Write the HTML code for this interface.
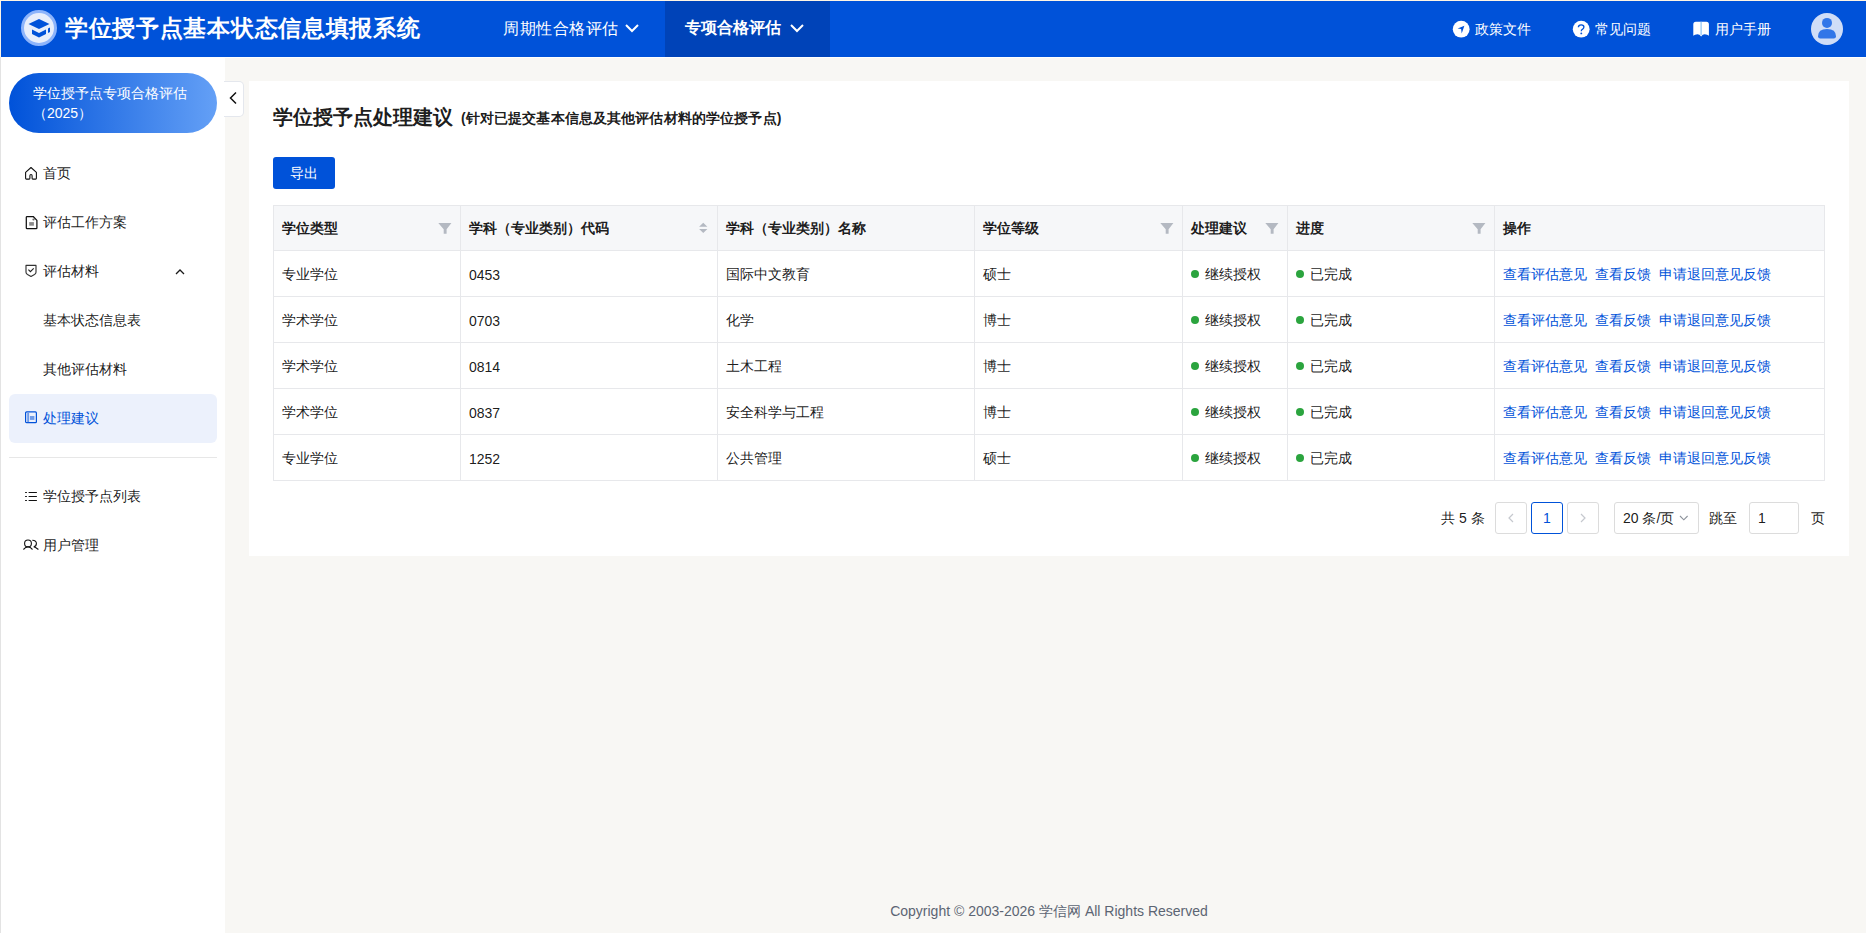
<!DOCTYPE html>
<html><head><meta charset="utf-8">
<style>
*{box-sizing:border-box;margin:0;padding:0}
html,body{width:1866px;height:933px;overflow:hidden;background:#fff;font-family:"Liberation Sans",sans-serif;color:rgba(0,0,0,.9);font-size:14px}
.abs{position:absolute}
.t{position:absolute;white-space:nowrap;line-height:20px}
#edgeT{left:0;top:0;width:1866px;height:1px;background:#fff5e4}
#edgeL{left:0;top:0;width:1px;height:933px;background:linear-gradient(#fcf4e6 0,#fcf4e6 57px,#e3e3e3 57px)}
#hdr{left:1px;top:1px;width:1865px;height:56px;background:#0052d9}
#navact{left:665px;top:1px;width:165px;height:56px;background:#0043b8}
.hw{color:#fff}
#main{left:225px;top:58px;width:1641px;height:875px;background:#f8f7f4}
#card{left:249px;top:81px;width:1600px;height:475px;background:#fff}
#pill{left:9px;top:73px;width:208px;height:60px;border-radius:30px;background:linear-gradient(90deg,#0052d9,#64a0f6)}
#actbg{left:9px;top:394px;width:208px;height:49px;border-radius:6px;background:#ecf1fc}
#divider{left:9px;top:457px;width:208px;height:1px;background:#e7e7e7}
#collapse{left:224px;top:81px;width:20px;height:36px;background:#fff;border:1px solid #e4e7ed;border-left:none;border-radius:0 5px 5px 0}
.menu{color:rgba(0,0,0,.9)}
table{position:absolute;left:273px;top:205px;width:1552px;border-collapse:collapse;table-layout:fixed}
td,th{border:1px solid #e7e8eb;height:46px;padding:0 8px;text-align:left;font-size:14px;white-space:nowrap;position:relative}
th{background:#f6f7f9;font-weight:bold;height:45px;padding-top:2px}
td{padding-top:2px}
.dot{display:inline-block;width:8px;height:8px;border-radius:4px;background:#2ba43e;margin-right:6px;vertical-align:1px}
.lnk{color:#0052d9;margin-right:8px}
.fi{position:absolute;right:9px;top:18px}
.pg{position:absolute;top:502px;height:32px;border:1px solid #dcdcdc;border-radius:3px;background:#fff}
#foot{left:249px;width:1600px;top:901px;text-align:center;color:#5c6573;font-size:14px}
</style></head><body>
<div id="edgeT" class="abs"></div>
<div id="edgeL" class="abs"></div>
<div id="hdr" class="abs"></div>
<div id="navact" class="abs"></div>

<!-- logo -->
<svg class="abs" style="left:20px;top:10px" width="38" height="38" viewBox="0 0 38 38">
 <circle cx="19" cy="18" r="16.5" fill="#e8eefb" stroke="#8db4fb" stroke-width="3"/>
 <path d="M8.5 14 L19 9 L29.5 14 L19 19 Z" fill="#0052d9"/>
 <path d="M12 19.5 L19 23 L26 19.5 L26 24 L19 27.5 L12 24 Z" fill="#0052d9"/>
 <path d="M28 18.5 L30 17.5 L30 22 L28 23 Z" fill="#0052d9"/>
</svg>
<div class="t hw" style="left:65px;top:16px;font-size:23px;line-height:24px;font-weight:bold;letter-spacing:.7px">学位授予点基本状态信息填报系统</div>

<div class="t hw" style="left:503px;top:19px;font-size:16px;line-height:20px;letter-spacing:.5px">周期性合格评估</div>
<svg class="abs" style="left:624px;top:22px" width="16" height="12" viewBox="0 0 16 12"><path d="M2 3 L8 9 L14 3" fill="none" stroke="#fff" stroke-width="2"/></svg>
<div class="t hw" style="left:685px;top:18px;font-size:16px;line-height:20px;font-weight:bold">专项合格评估</div>
<svg class="abs" style="left:789px;top:22px" width="16" height="12" viewBox="0 0 16 12"><path d="M2 3 L8 9 L14 3" fill="none" stroke="#fff" stroke-width="2"/></svg>

<!-- right header -->
<svg class="abs" style="left:1452px;top:20px" width="18" height="18" viewBox="0 0 18 18"><circle cx="9.2" cy="9.2" r="8.4" fill="#fff"/><path d="M12.4 5.8 L5.6 8.4 L9.1 8.9 L9.7 13.5 Z" fill="#0052d9"/></svg>
<div class="t hw" style="left:1475px;top:19px">政策文件</div>
<svg class="abs" style="left:1572px;top:20px" width="18" height="18" viewBox="0 0 18 18"><circle cx="9.2" cy="9.2" r="8.4" fill="#fff"/><path d="M6.4 7.2 Q6.4 4.8 9.2 4.8 Q11.9 4.8 11.9 7 Q11.9 8.4 10.4 9.3 Q9.3 10 9.3 11.2" fill="none" stroke="#0052d9" stroke-width="1.35"/><circle cx="9.3" cy="13.4" r="0.95" fill="#0052d9"/></svg>
<div class="t hw" style="left:1595px;top:19px">常见问题</div>
<svg class="abs" style="left:1692px;top:21px" width="18" height="17" viewBox="0 0 18 17"><path d="M1.3 3.3 Q1.3 0.8 3.8 0.8 L14.4 0.8 Q16.9 0.8 16.9 3.3 L16.9 14.7 Q15.5 13.2 12.8 13.2 Q10.5 13.2 9.1 15.6 Q7.7 13.2 5.4 13.2 Q2.7 13.2 1.3 14.7 Z" fill="#fff"/><rect x="8.5" y="0.8" width="1.2" height="13.5" fill="#8cc4f4"/></svg>
<div class="t hw" style="left:1715px;top:19px">用户手册</div>
<svg class="abs" style="left:1811px;top:13px" width="32" height="32" viewBox="0 0 32 32"><circle cx="16" cy="16" r="16" fill="#cfddf7"/><circle cx="16" cy="9.9" r="5" fill="#3176e8"/><path d="M7 23.3 Q7 15.9 16 15.9 Q25 15.9 25 23.3 Q25 25.6 22.8 25.6 L9.2 25.6 Q7 25.6 7 23.3 Z" fill="#3176e8"/></svg>

<!-- sidebar -->
<div id="pill" class="abs"></div>
<div class="t hw" style="left:33px;top:83px;line-height:20px">学位授予点专项合格评估</div>
<div class="t hw" style="left:33px;top:103px;line-height:20px">（2025）</div>

<svg class="abs" style="left:24px;top:166px" width="14" height="15" viewBox="0 0 14 15"><path d="M1.6 6.3 L7 1.5 L12.4 6.3 L12.4 12.3 Q12.4 13.1 11.6 13.1 L8.9 13.1 Q8.1 13.1 8.1 12.3 L8.1 9.7 Q8.1 8.5 7 8.5 Q5.9 8.5 5.9 9.7 L5.9 12.3 Q5.9 13.1 5.1 13.1 L2.4 13.1 Q1.6 13.1 1.6 12.3 Z" fill="none" stroke="#111" stroke-width="1.1" stroke-linejoin="round"/></svg>
<div class="t menu" style="left:43px;top:163px">首页</div>
<svg class="abs" style="left:25px;top:215px" width="13" height="15" viewBox="0 0 13 15"><path d="M2.1 1.5 Q1.3 1.5 1.3 2.3 L1.3 12.9 Q1.3 13.7 2.1 13.7 L11.1 13.7 Q11.9 13.7 11.9 12.9 L11.9 5.4 L8.2 1.5 Z" fill="none" stroke="#111" stroke-width="1.25" stroke-linejoin="round"/><circle cx="8.5" cy="4.5" r="1.1" fill="#666"/><rect x="4.2" y="7.1" width="4.7" height="3.6" fill="#8a8a8a"/></svg>
<div class="t menu" style="left:43px;top:212px">评估工作方案</div>
<svg class="abs" style="left:24px;top:263px" width="14" height="15" viewBox="0 0 14 15"><path d="M2 2.4 L12 2.4 L12 9.3 Q12 10.7 10.5 11.6 L7 13.4 L3.5 11.6 Q2 10.7 2 9.3 Z" fill="none" stroke="#333" stroke-width="1.15" stroke-linejoin="round"/><path d="M4.4 6.6 L6.4 8.6 L9.7 5.3" fill="none" stroke="#222" stroke-width="1.15"/></svg>
<div class="t menu" style="left:43px;top:261px">评估材料</div>
<svg class="abs" style="left:174px;top:267px" width="12" height="10" viewBox="0 0 12 10"><path d="M2 7 L6 3 L10 7" fill="none" stroke="#1a1a1a" stroke-width="1.3"/></svg>
<div class="t menu" style="left:43px;top:310px">基本状态信息表</div>
<div class="t menu" style="left:43px;top:359px">其他评估材料</div>
<div id="actbg" class="abs"></div>
<svg class="abs" style="left:25px;top:411px" width="13" height="13" viewBox="0 0 13 13"><rect x="0.6" y="0.9" width="10.8" height="10.8" rx="1" fill="none" stroke="#0052d9" stroke-width="1.2"/><rect x="2.2" y="1.5" width="1.9" height="9.6" fill="#6f9be8"/><rect x="4.9" y="5" width="4.5" height="3.9" fill="#6f9be8"/></svg>
<div class="t" style="left:43px;top:408px;color:#0052d9">处理建议</div>
<div id="divider" class="abs"></div>
<svg class="abs" style="left:24px;top:486px" width="14" height="18" viewBox="0 0 14 18"><g fill="#111"><rect x="1" y="5.9" width="2" height="1.2" rx=".5"/><rect x="1" y="9.9" width="2" height="1.2" rx=".5"/><rect x="1" y="13.9" width="2" height="1.2" rx=".5"/><rect x="4.5" y="5.9" width="8.5" height="1.2" rx=".5"/><rect x="4.5" y="9.9" width="8.5" height="1.2" rx=".5"/><rect x="4.5" y="13.9" width="8.5" height="1.2" rx=".5"/></g></svg>
<div class="t menu" style="left:43px;top:486px">学位授予点列表</div>
<svg class="abs" style="left:20px;top:534px" width="22" height="22" viewBox="0 0 22 22"><g fill="none" stroke="#111" stroke-width="1.1"><circle cx="8" cy="9.4" r="3.4"/><path d="M3.4 15.5 L5.8 13.4 Q8 12.4 10.2 13.4 L12.5 15.5"/><path d="M12.3 6.2 Q16.4 6.2 16.4 9.5 Q16.4 12.4 13.7 12.7 Q15.8 13.3 18.4 15.5"/></g></svg>
<div class="t menu" style="left:43px;top:535px">用户管理</div>

<!-- main -->
<div id="main" class="abs"></div>
<div id="collapse" class="abs"></div>
<svg class="abs" style="left:228px;top:91px" width="10" height="14" viewBox="0 0 10 14"><path d="M8 1.5 L2.5 7 L8 12.5" fill="none" stroke="#111" stroke-width="1.5"/></svg>
<div id="card" class="abs"></div>

<div class="t" style="left:273px;top:103px;font-size:20px;line-height:28px;font-weight:bold">学位授予点处理建议</div>
<div class="t" style="left:461px;top:108px;font-size:14px;line-height:20px;font-weight:bold;letter-spacing:.13px">(针对已提交基本信息及其他评估材料的学位授予点)</div>

<div class="abs" style="left:273px;top:157px;width:62px;height:32px;border-radius:3px;background:#0052d9"></div>
<div class="t hw" style="left:290px;top:163px">导出</div>

<table>
<colgroup><col style="width:187px"><col style="width:257px"><col style="width:257px"><col style="width:208px"><col style="width:105px"><col style="width:207px"><col style="width:330px"></colgroup>
<tr><th>学位类型</th>
<th>学科（专业类别）代码</th>
<th>学科（专业类别）名称</th>
<th>学位等级</th>
<th>处理建议</th>
<th>进度</th>
<th>操作</th></tr>
<tr><td>专业学位</td><td>0453</td><td>国际中文教育</td><td>硕士</td><td><span class="dot"></span>继续授权</td><td><span class="dot"></span>已完成</td><td><span class="lnk">查看评估意见</span><span class="lnk">查看反馈</span><span class="lnk">申请退回意见反馈</span></td></tr>
<tr><td>学术学位</td><td>0703</td><td>化学</td><td>博士</td><td><span class="dot"></span>继续授权</td><td><span class="dot"></span>已完成</td><td><span class="lnk">查看评估意见</span><span class="lnk">查看反馈</span><span class="lnk">申请退回意见反馈</span></td></tr>
<tr><td>学术学位</td><td>0814</td><td>土木工程</td><td>博士</td><td><span class="dot"></span>继续授权</td><td><span class="dot"></span>已完成</td><td><span class="lnk">查看评估意见</span><span class="lnk">查看反馈</span><span class="lnk">申请退回意见反馈</span></td></tr>
<tr><td>学术学位</td><td>0837</td><td>安全科学与工程</td><td>博士</td><td><span class="dot"></span>继续授权</td><td><span class="dot"></span>已完成</td><td><span class="lnk">查看评估意见</span><span class="lnk">查看反馈</span><span class="lnk">申请退回意见反馈</span></td></tr>
<tr><td>专业学位</td><td>1252</td><td>公共管理</td><td>硕士</td><td><span class="dot"></span>继续授权</td><td><span class="dot"></span>已完成</td><td><span class="lnk">查看评估意见</span><span class="lnk">查看反馈</span><span class="lnk">申请退回意见反馈</span></td></tr>
</table>
<svg class="abs" style="left:438px;top:223px" width="15" height="12" viewBox="0 0 15 12"><path d="M0.3 0 L13.4 0 L8.6 6.2 L8.6 10.8 L5.7 10.8 L5.7 6.2 Z" fill="#b4b9c2"/></svg>
<svg class="abs" style="left:1160px;top:223px" width="15" height="12" viewBox="0 0 15 12"><path d="M0.3 0 L13.4 0 L8.6 6.2 L8.6 10.8 L5.7 10.8 L5.7 6.2 Z" fill="#b4b9c2"/></svg>
<svg class="abs" style="left:1265px;top:223px" width="15" height="12" viewBox="0 0 15 12"><path d="M0.3 0 L13.4 0 L8.6 6.2 L8.6 10.8 L5.7 10.8 L5.7 6.2 Z" fill="#b4b9c2"/></svg>
<svg class="abs" style="left:1472px;top:223px" width="15" height="12" viewBox="0 0 15 12"><path d="M0.3 0 L13.4 0 L8.6 6.2 L8.6 10.8 L5.7 10.8 L5.7 6.2 Z" fill="#b4b9c2"/></svg>
<svg class="abs" style="left:699px;top:222px" width="9" height="12" viewBox="0 0 9 12"><path d="M4.25 0.8 L8.4 4.8 L0.1 4.8 Z M0.1 6.9 L8.4 6.9 L4.25 11 Z" fill="#b4b9c2"/></svg>


<!-- pagination -->
<div class="t" style="left:1441px;top:508px">共 5 条</div>
<div class="pg" style="left:1495px;width:32px"></div>
<svg class="abs" style="left:1506px;top:512px" width="10" height="12" viewBox="0 0 10 12"><path d="M7 2 L3 6 L7 10" fill="none" stroke="#c5c8ce" stroke-width="1.2"/></svg>
<div class="pg" style="left:1531px;width:32px;border-color:#0052d9"></div>
<div class="t" style="left:1531px;width:32px;text-align:center;top:508px;color:#0052d9">1</div>
<div class="pg" style="left:1567px;width:32px"></div>
<svg class="abs" style="left:1578px;top:512px" width="10" height="12" viewBox="0 0 10 12"><path d="M3 2 L7 6 L3 10" fill="none" stroke="#c5c8ce" stroke-width="1.2"/></svg>
<div class="pg" style="left:1614px;width:85px"></div>
<div class="t" style="left:1623px;top:508px">20 条/页</div>
<svg class="abs" style="left:1677px;top:512px" width="12" height="12" viewBox="0 0 12 12"><path d="M3 4 L6.8 7.8 L10.6 4" fill="none" stroke="#8d939c" stroke-width="1.1"/></svg>
<div class="t" style="left:1709px;top:508px">跳至</div>
<div class="pg" style="left:1749px;width:50px"></div>
<div class="t" style="left:1758px;top:508px">1</div>
<div class="t" style="left:1811px;top:508px">页</div>

<div id="foot" class="t">Copyright © 2003-2026 学信网 All Rights Reserved</div>
</body></html>
